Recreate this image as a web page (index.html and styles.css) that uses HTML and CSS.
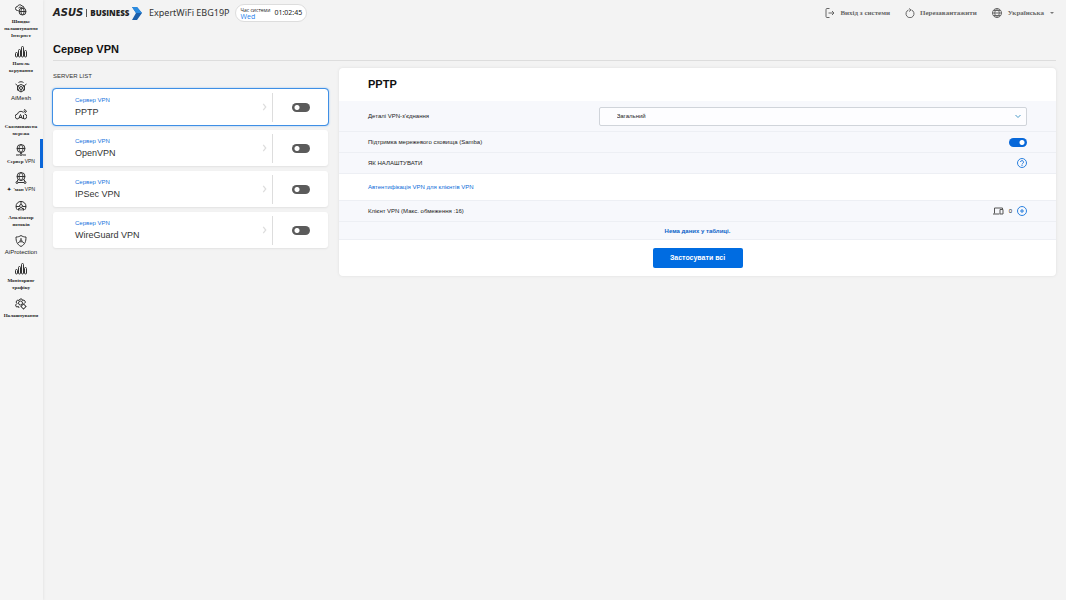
FILE: index.html
```html
<!DOCTYPE html>
<html lang="uk">
<head>
<meta charset="utf-8">
<title>ExpertWiFi EBG19P - Сервер VPN</title>
<link rel="stylesheet" href="styles.css">
</head>
<body>
<svg class="defs" aria-hidden="true">
  <symbol id="i-setup" viewBox="0 0 24 24"><path d="M7 13H5a4 4 0 0 1 0-8 5 5 0 0 1 9-1 4 4 0 0 1 4 4M7 8a5 5 0 0 1 8 1"/><circle cx="15" cy="15" r="7"/><path d="M8 15h14M15 8c-4 4-4 10 0 14M15 8c4 4 4 10 0 14"/></symbol>
  <symbol id="i-bars" viewBox="0 0 24 24"><rect x="1" y="13" width="4" height="9" rx="2"/><rect x="7" y="7" width="4" height="15" rx="2"/><rect x="13" y="1" width="4" height="21" rx="2"/><rect x="19" y="9" width="4" height="13" rx="2"/></symbol>
  <symbol id="i-mesh" viewBox="0 0 24 24"><circle cx="12" cy="14" r="3"/><path d="M12 7 5 10v8l7 4 7-4v-8zM5 10l4 3M19 10l-4 3M12 17v5M5 18l4-3M19 18l-4-3M1 6l4 3M23 6l-4 3M7 3c3-2 7-2 10 0"/></symbol>
  <symbol id="i-cloud" viewBox="0 0 24 24"><path d="M6 20a5 5 0 0 1-1-10 7 7 0 0 1 12-3M19 10a5 5 0 0 1-1 10M7 20l4-9 4 9M8 17h6M17 12v8M17 4a4 4 0 0 1 4 4M18 1a6 6 0 0 1 5 5"/></symbol>
  <symbol id="i-vpn" viewBox="0 0 24 24"><circle cx="12" cy="9" r="8"/><path d="M4 9h16M12 1c-5 5-5 11 0 16M12 1c5 5 5 11 0 16M12 17v3M2 22h7M15 22h7"/><circle cx="12" cy="21" r="2"/></symbol>
  <symbol id="i-fusion" viewBox="0 0 24 24"><circle cx="12" cy="9" r="8"/><path d="M4 9h16M12 1c-5 5-5 11 0 16M12 1c5 5 5 11 0 16M6 15l-2 4M18 15l2 4M6 21h12"/><circle cx="4" cy="21" r="2"/><circle cx="20" cy="21" r="2"/></symbol>
  <symbol id="i-gauge" viewBox="0 0 24 24"><path d="M5 20a10 10 0 1 1 14 0M2 13h6M16 13h6M12 3v5M7 21v-4h3v4M14 21v-4h3v4"/><circle cx="12" cy="12" r="3"/></symbol>
  <symbol id="i-shield" viewBox="0 0 24 24"><path d="M12 1c3 2 6 3 10 3 0 9-2 15-10 19C4 19 2 13 2 4c4 0 7-1 10-3zM12 6v4M10 13l-4 3M14 13l4 3"/><circle cx="12" cy="12" r="2"/></symbol>
  <symbol id="i-gear" viewBox="0 0 24 24"><path d="M8 20l-1-3-4 1-2-4 3-3-2-3 3-4 3 1 2-3h4l1 3 3-1 3 4-2 3"/><circle cx="11" cy="10" r="4"/><circle cx="17" cy="17" r="4"/><path d="M17 11v2M17 21v2M11 17h2M21 17h2"/></symbol>
  <symbol id="i-next" viewBox="0 0 8 12"><path d="M2 1l4 5-4 5"/></symbol>
</svg>
<div class="app">
  <nav class="side">
    <a href="#" class="item"><svg><use href="#i-setup"/></svg><span>Швидке налаштування Інтернет</span></a>
    <a href="#" class="item"><svg><use href="#i-bars"/></svg><span>Панель керування</span></a>
    <a href="#" class="item latin"><svg><use href="#i-mesh"/></svg><span>AiMesh</span></a>
    <a href="#" class="item"><svg><use href="#i-cloud"/></svg><span>Скозмопачена мережа</span></a>
    <a href="#" class="item active"><svg><use href="#i-vpn"/></svg><span>Сервер <b>VPN</b></span></a>
    <a href="#" class="item"><svg><use href="#i-fusion"/></svg><span>✦ &nbsp;'ман <b>VPN</b></span></a>
    <a href="#" class="item"><svg><use href="#i-gauge"/></svg><span>Аналізатор потоків</span></a>
    <a href="#" class="item latin"><svg><use href="#i-shield"/></svg><span>AiProtection</span></a>
    <a href="#" class="item"><svg><use href="#i-bars"/></svg><span>Моніторинг трафіку</span></a>
    <a href="#" class="item"><svg><use href="#i-gear"/></svg><span>Налаштування</span></a>
  </nav>
  <div class="page">
    <header class="top">
      <div class="brand"><i>ASUS</i><span class="bar"></span><b>BUSINESS</b>
        <svg class="flag" viewBox="0 0 10 13"><path fill="#1c5faa" d="M0 0h5l5 6-5 7H0l4-7z"/><path fill="#2b8be0" d="M0 0h5l5 6H4z"/></svg>
      </div>
      <div class="model">ExpertWiFi EBG19P</div>
      <div class="clock"><div class="day"><span>Час системи</span><em>Wed</em></div><time>01:02:45</time></div>
      <div class="actions">
        <a href="#"><svg viewBox="0 0 20 20"><path d="M9 1H4a2 2 0 0 0-2 2v14a2 2 0 0 0 2 2h5M7 10h11M14 6l4 4-4 4"/></svg>Вихід з системи</a>
        <a href="#"><svg viewBox="0 0 20 20"><path d="M13 4a8 8 0 1 1-6 0M8 1l4 3-4 3"/></svg>Перезавантажити</a>
        <button type="button"><svg viewBox="0 0 20 20"><circle cx="10" cy="10" r="9"/><path d="M1 10h18M3 5h14M3 15h14M10 1c-6 6-6 12 0 18M10 1c6 6 6 12 0 18"/></svg>Українська<span class="caret"></span></button>
      </div>
    </header>
    <h1>Сервер VPN</h1>
    <div class="content">
      <section class="list">
        <h2>SERVER LIST</h2>
        <div class="card selected"><a href="#"><span class="kind">Сервер VPN</span><span class="name">PPTP</span></a><svg class="next"><use href="#i-next"/></svg><div class="onoff"><input type="checkbox" class="switch" aria-label="PPTP"></div></div>
        <div class="card"><a href="#"><span class="kind">Сервер VPN</span><span class="name">OpenVPN</span></a><svg class="next"><use href="#i-next"/></svg><div class="onoff"><input type="checkbox" class="switch" aria-label="OpenVPN"></div></div>
        <div class="card"><a href="#"><span class="kind">Сервер VPN</span><span class="name">IPSec VPN</span></a><svg class="next"><use href="#i-next"/></svg><div class="onoff"><input type="checkbox" class="switch" aria-label="IPSec VPN"></div></div>
        <div class="card"><a href="#"><span class="kind">Сервер VPN</span><span class="name">WireGuard VPN</span></a><svg class="next"><use href="#i-next"/></svg><div class="onoff"><input type="checkbox" class="switch" aria-label="WireGuard VPN"></div></div>
      </section>
      <section class="panel">
        <h3>PPTP</h3>
        <div class="row tall"><label for="details">Деталі VPN-з'єднання</label>
          <div class="pick"><select id="details"><option>Загальний</option></select><svg viewBox="0 0 12 8"><path d="M1 1l5 5 5-5"/></svg></div></div>
        <div class="row"><label for="samba">Підтримка мережевого сховища (Samba)</label><input type="checkbox" class="switch" id="samba" checked></div>
        <div class="row"><span>ЯК НАЛАШТУВАТИ</span><button type="button" class="ico" aria-label="Довідка"><svg viewBox="0 0 20 20"><circle cx="10" cy="10" r="9"/><path d="M7 8a3 3 0 1 1 4 3l-1 2M10 14v2"/></svg></button></div>
        <div class="row link"><a href="#">Автентифікація VPN для клієнтів VPN</a></div>
        <div class="row"><span>Клієнт VPN (Макс. обмеження :16)</span>
          <div class="tools"><svg class="dev" viewBox="0 0 22 16"><path d="M3 13V2h16v2M0 14h13M14 5h6v9h-6z"/></svg><span>0</span><button type="button" class="ico add" aria-label="Додати"><svg viewBox="0 0 20 20"><circle cx="10" cy="10" r="9"/><path d="M10 6v8M6 10h8"/></svg></button></div></div>
        <div class="row empty">Нема даних у таблиці.</div>
        <div class="foot"><button type="button" class="apply">Застосувати всі</button></div>
      </section>
    </div>
  </div>
</div>
</body>
</html>
```
FILE: styles.css
```css
* { box-sizing: border-box; }
body { margin: 0; background: #f3f3f3; color: #222; font: 6px/8px "Liberation Sans", Arial, sans-serif; }
a { color: inherit; text-decoration: none; }
button { padding: 0; border: 0; background: none; font: inherit; color: inherit; }
svg { fill: none; stroke: currentColor; stroke-width: 2; flex: none; }
.defs { position: absolute; width: 0; height: 0; }
.app { display: flex; min-height: 100vh; }

.side { width: 43px; flex: none; padding-top: 4px; background: #f5f5f5; box-shadow: 1px 0 2px #e6e6e6; }
.item { display: flex; flex-direction: column; align-items: center; gap: 2px; margin-bottom: 7px; text-align: center; font: bold 5px/7px "Liberation Serif", "Times New Roman", serif; border-right: 3px solid transparent; border-left: 2px solid transparent; }
.item svg { width: 12px; height: 12px; color: #333; stroke-width: 2; }
.item span { min-height: 7px; max-width: 38px; }
.item b { font: 5px/7px "Liberation Sans", Arial, sans-serif; }
.latin { font: 6px/7px "Liberation Sans", Arial, sans-serif; }
.item:nth-child(5) span, .item:nth-child(6) span { white-space: nowrap; }
.active { margin-top: -5px; padding: 5px 0 3px; margin-bottom: 4px; border-right-color: #0a66d8; }

.page { flex: 1; min-width: 0; padding: 0 10px; }
.top { display: flex; align-items: center; height: 26px; }
.brand { display: flex; align-items: center; gap: 3px; width: 96px; font: bold 8px/12px "Open Sans", sans-serif; }
.brand i { font: italic bold 10px/12px "DejaVu Sans", sans-serif; }
.bar { width: 1px; height: 8px; background: #555; }
.flag { width: 10px; height: 13px; stroke: none; }
.model { font: 9px/12px "Noto Sans", sans-serif; color: #333; }
.clock { display: flex; align-items: center; gap: 4px; height: 18px; margin-left: 5px; padding: 0 4px 0 5px; background: #fff; border: 1px solid #ddd; border-radius: 9px; font: 7px/8px "Noto Sans", sans-serif; }
.day { display: flex; flex-direction: column; font: 5px/6px "Open Sans", sans-serif; }
.day em { font: 7px/7px "Open Sans", sans-serif; color: #2680eb; }
.actions { display: flex; gap: 15px; margin-left: auto; color: #666; font: bold 7px/10px "Liberation Serif", "Times New Roman", serif; }
.actions > * { display: flex; align-items: center; gap: 5px; }
.actions svg { width: 10px; height: 10px; }
.actions button { gap: 6px; padding-right: 2px; }
.caret { border: 2px solid transparent; border-top-color: #777; border-bottom: 0; }

h1 { margin: 0 0 7px; padding: 16px 0 3px; border-bottom: 1px solid #ddd; font-size: 11px; line-height: 15px; color: #111; }
.content { display: grid; grid-template-columns: 275px 1fr; gap: 11px; align-items: start; }
h2 { margin: 4px 0 8px; font-size: 6px; line-height: 9px; font-weight: normal; color: #333; }
.list { display: flex; flex-direction: column; }
.card { display: flex; align-items: center; height: 36px; margin-bottom: 5px; background: #fff; border-radius: 3px; box-shadow: 0 1px 2px #e2e2e2; }
.selected { outline: 1px solid #3f8fe5; box-shadow: 0 0 2px 1px #8bbcf0; }
.card a { display: flex; flex: 1; flex-direction: column; gap: 1px; padding-left: 22px; }
.kind { color: #1673dc; }
.name { font-size: 9px; line-height: 14px; color: #333; }
.next { width: 5px; height: 8px; margin-right: 5px; color: #ddd; }
.onoff { display: flex; align-items: center; justify-content: center; width: 56px; height: 29px; border-left: 1px solid #ddd; }
.switch { appearance: none; width: 18px; height: 9px; margin: 0; border-radius: 5px; background: radial-gradient(circle at 5px 50%, #fff 2px, #5b5b5b 3px); }
.switch:checked { background: radial-gradient(circle at 13px 50%, #fff 2px, #0868d9 3px); }

.panel { background: #fff; border-radius: 4px; box-shadow: 0 0 3px #ddd; }
h3 { margin: 0; padding: 9px 29px 10px; font-size: 11px; line-height: 14px; color: #111; }
.row { display: flex; align-items: center; justify-content: space-between; min-height: 21px; padding: 0 29px; background: #f7f8fc; border-bottom: 1px solid #edeff4; }
.tall { min-height: 31px; }
.pick { position: relative; width: 65%; }
.pick select { display: block; appearance: none; width: 100%; height: 19px; padding: 0 17px; background: #fdfdff; border: 1px solid #d0d4da; border-radius: 2px; font: 6px/8px "Liberation Sans", Arial, sans-serif; color: #222; }
.pick svg { position: absolute; right: 6px; top: 7px; width: 6px; height: 5px; color: #4a9bc8; pointer-events: none; }
.ico { display: flex; color: #2b80de; }
.ico svg { width: 10px; height: 10px; }
.link { min-height: 27px; background: #fff; color: #0b6bd8; }
.tools { display: flex; align-items: center; gap: 5px; }
.dev { width: 11px; height: 8px; color: #555; }
.empty { justify-content: center; min-height: 18px; color: #0b62c8; font-weight: bold; }
.foot { display: flex; justify-content: center; padding: 8px; }
.apply { width: 90px; height: 20px; border-radius: 2px; background: #006ce1; color: #fff; font: bold 7px/8px "Liberation Sans", Arial, sans-serif; }
```
